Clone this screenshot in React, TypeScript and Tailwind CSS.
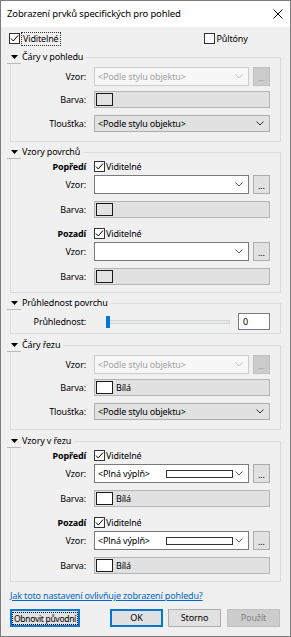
import React from "react";

const Chevron = ({ color }: { color: string }) => (
  <svg width="8" height="5" viewBox="0 0 8 5">
    <polyline points="0.5,0.5 4,4 7.5,0.5" fill="none" stroke={color} strokeWidth="1" />
  </svg>
);

const Check = () => (
  <svg width="9" height="9" viewBox="0 0 9 9" className="absolute left-[0px] top-[0px]">
    <polyline points="1,4.5 3.3,7 8,1.5" fill="none" stroke="#000" strokeWidth="1" />
  </svg>
);

const Box = ({ checked }: { checked: boolean }) => (
  <div className="relative h-[11px] w-[11px] shrink-0 border border-[#333] bg-white">
    {checked && <Check />}
  </div>
);

const Tri = () => (
  <svg width="7" height="4" viewBox="0 0 7 4">
    <polygon points="0,0 7,0 3.5,4" fill="#000" />
  </svg>
);

const Label = ({ children, bold }: { children: React.ReactNode; bold?: boolean }) => (
  <div className={bold ? "w-[75px] shrink-0 text-right font-bold" : "w-[75px] shrink-0 text-right"}>{children}</div>
);

const Dots = ({ disabled }: { disabled?: boolean }) => (
  <div
    className={
      disabled
        ? "flex h-[19px] w-[17px] shrink-0 items-end justify-center border border-[#bfbfbf] bg-[#cccccc] pb-[3px] text-[#9a9a9a] leading-none"
        : "flex h-[19px] w-[17px] shrink-0 items-end justify-center border border-[#adadad] bg-[#e1e1e1] pb-[3px] text-black leading-none"
    }
  >
    ...
  </div>
);

const Header = ({ title }: { title: string }) => (
  <div className="relative z-10 ml-[6px] flex h-[14px] w-fit items-center bg-[#f0f0f0] pr-[3px]">
    <div className="flex h-[14px] w-[14px] items-center justify-center border-b border-[#b9b9b9]">
      <Tri />
    </div>
    <span className="ml-[1px] whitespace-nowrap">{title}</span>
  </div>
);

const Swatch = ({ white }: { white?: boolean }) => (
  <div className={white ? "h-[13px] w-[17px] shrink-0 border border-[#1a1a1a] bg-white" : "h-[13px] w-[17px] shrink-0 border border-[#1a1a1a] bg-[#e3e3e3]"} />
);

const ColorField = ({ white, text }: { white?: boolean; text?: string }) => (
  <div className="flex h-[17px] w-[176px] items-center gap-[3px] border border-[#b4b4b4] bg-[#e1e1e1] pl-[1px]">
    <Swatch white={white} />
    {text && <span>{text}</span>}
  </div>
);

const DisabledCombo = () => (
  <div className="flex h-[19px] items-center gap-[4px]">
    <div className="flex h-[19px] w-[155px] items-center justify-between border border-[#cccccc] bg-[#f7f7f7] pl-[3px] pr-[5px] text-[#a3a3a3]">
      <span>&lt;Podle stylu objektu&gt;</span>
      <Chevron color="#c4c4c4" />
    </div>
    <Dots disabled />
  </div>
);

const WhiteCombo = ({ fill }: { fill?: boolean }) => (
  <div className="flex h-[19px] items-center gap-[4px]">
    <div className="flex h-[19px] w-[155px] items-center border border-[#7a7a7a] bg-white pl-[3px] pr-[5px]">
      {fill ? (
        <>
          <span className="w-[68px] shrink-0">&lt;Plná výplň&gt;</span>
          <div className="h-[8px] w-[67px] shrink-0 border border-[#333] bg-white" />
          <div className="flex-1" />
        </>
      ) : (
        <div className="flex-1" />
      )}
      <Chevron color="#606060" />
    </div>
    <Dots />
  </div>
);

const ThickCombo = () => (
  <div className="flex h-[17px] w-[176px] items-center justify-between border border-[#adadad] bg-[#e1e1e1] pl-[3px] pr-[5px]">
    <span>&lt;Podle stylu objektu&gt;</span>
    <Chevron color="#333" />
  </div>
);

const LinesSection = ({ title, white }: { title: string; white?: boolean }) => (
  <div>
    <Header title={title} />
    <div className="-mt-[7px] ml-[9px] w-[271px] border border-[#dcdcdc] pb-[9px] pt-[9px]">
      <div className="flex h-[19px] items-center gap-[8px]">
        <Label>Vzor:</Label>
        <DisabledCombo />
      </div>
      <div className="mt-[5px] flex h-[17px] items-center gap-[8px]">
        <Label>Barva:</Label>
        <ColorField white={white} text={white ? "Bílá" : undefined} />
      </div>
      <div className="mt-[7px] flex h-[17px] items-center gap-[8px]">
        <Label>Tloušťka:</Label>
        <ThickCombo />
      </div>
    </div>
  </div>
);

const PatternBlock = ({ name, fill, white, first }: { name: string; fill?: boolean; white?: boolean; first?: boolean }) => (
  <>
    <div className={first ? "flex h-[13px] items-center gap-[8px]" : "mt-[9px] flex h-[13px] items-center gap-[8px]"}>
      <Label bold>{name}</Label>
      <Box checked />
      <span className="-ml-[7px]">Viditelné</span>
    </div>
    <div className="mt-[2px] flex h-[19px] items-center gap-[8px]">
      <Label>Vzor:</Label>
      <WhiteCombo fill={fill} />
    </div>
    <div className="mt-[7px] flex h-[17px] items-center gap-[8px]">
      <Label>Barva:</Label>
      <ColorField white={white} text={white ? "Bílá" : undefined} />
    </div>
  </>
);

const PatternSection = ({ title, fill, white }: { title: string; fill?: boolean; white?: boolean }) => (
  <div>
    <Header title={title} />
    <div className="-mt-[7px] ml-[9px] w-[271px] border border-[#dcdcdc] pb-[7px] pt-[7px]">
      <PatternBlock name="Popředí" fill={fill} white={white} first />
      <PatternBlock name="Pozadí" fill={fill} white={white} />
    </div>
  </div>
);

const Btn = ({ children, kind, w }: { children: React.ReactNode; kind: "focus" | "normal" | "disabled"; w: string }) => {
  const base = "flex h-[18px] items-center justify-center whitespace-nowrap ";
  if (kind === "focus") return <div className={base + w + " border-2 border-[#0078d7] bg-[#e1e1e1]"}>{children}</div>;
  if (kind === "disabled") return <div className={base + w + " border border-[#bfbfbf] bg-[#cccccc] text-[#838383]"}>{children}</div>;
  return <div className={base + w + " border border-[#adadad] bg-[#e1e1e1]"}>{children}</div>;
};

export default function App() {
  return (
    <div className="flex h-[637px] w-[291px] flex-col border border-[#7c7c7c] bg-[#f0f0f0] font-['Noto_Sans',sans-serif] text-[9px] leading-[12px] tracking-[-0.15px] text-black">
      <div className="flex h-[26px] shrink-0 items-center justify-between bg-white pl-[6px] pr-[7px]">
        <span className="text-[9.5px]">Zobrazení prvků specifických pro pohled</span>
        <svg width="10" height="10" viewBox="0 0 10 10">
          <line x1="0.5" y1="0.5" x2="9.5" y2="9.5" stroke="#000" strokeWidth="1" />
          <line x1="9.5" y1="0.5" x2="0.5" y2="9.5" stroke="#000" strokeWidth="1" />
        </svg>
      </div>

      <div className="mt-[5px] flex h-[13px] items-center">
        <div className="ml-[8px]">
          <Box checked />
        </div>
        <span className="ml-[1px] border border-dotted border-[#333] px-[1px]">Viditelné</span>
        <div className="ml-[143px]">
          <Box checked={false} />
        </div>
        <span className="ml-[2px]">Půltóny</span>
      </div>

      <div className="mt-[5px]">
        <LinesSection title="Čáry v pohledu" />
      </div>

      <div className="mt-[3px]">
        <PatternSection title="Vzory povrchů" />
      </div>

      <div className="mt-[3px]">
        <Header title="Průhlednost povrchu" />
        <div className="-mt-[7px] ml-[9px] w-[271px] border border-[#dcdcdc] pb-[3px] pt-[9px]">
          <div className="flex h-[17px] items-center">
            <div className="w-[75px] shrink-0 text-right">Průhlednost:</div>
            <div className="relative ml-[20px] h-[12px] w-[124px]">
              <div className="absolute left-[2px] right-0 top-[4px] h-[4px] border border-[#d6d6d6] bg-[#e7eaea]" />
              <div className="absolute left-0 top-0 h-[12px] w-[4px] bg-[#0078d7]" />
            </div>
            <div className="ml-[8px] flex h-[17px] w-[32px] items-center border border-[#7a7a7a] bg-white pl-[4px]">0</div>
          </div>
        </div>
      </div>

      <div className="mt-[4px]">
        <LinesSection title="Čáry řezu" white />
      </div>

      <div className="mt-[4px]">
        <PatternSection title="Vzory v řezu" fill white />
      </div>

      <div className="ml-[9px] mt-[8px] h-[14px] whitespace-nowrap text-[#0066cc] underline">Jak toto nastavení ovlivňuje zobrazení pohledu?</div>

      <div className="mt-[5px] flex items-center">
        <div className="ml-[9px]">
          <Btn kind="focus" w="w-[70px]">
            <span className="border border-dotted border-black px-[1px] text-[8.5px] leading-[11px] tracking-[-0.3px]">Obnovit původní</span>
          </Btn>
        </div>
        <div className="ml-[30px]">
          <Btn kind="focus" w="w-[53px]">OK</Btn>
        </div>
        <div className="ml-[5px]">
          <Btn kind="normal" w="w-[53px]">Storno</Btn>
        </div>
        <div className="ml-[6px]">
          <Btn kind="disabled" w="w-[53px]">Použít</Btn>
        </div>
      </div>
    </div>
  );
}
